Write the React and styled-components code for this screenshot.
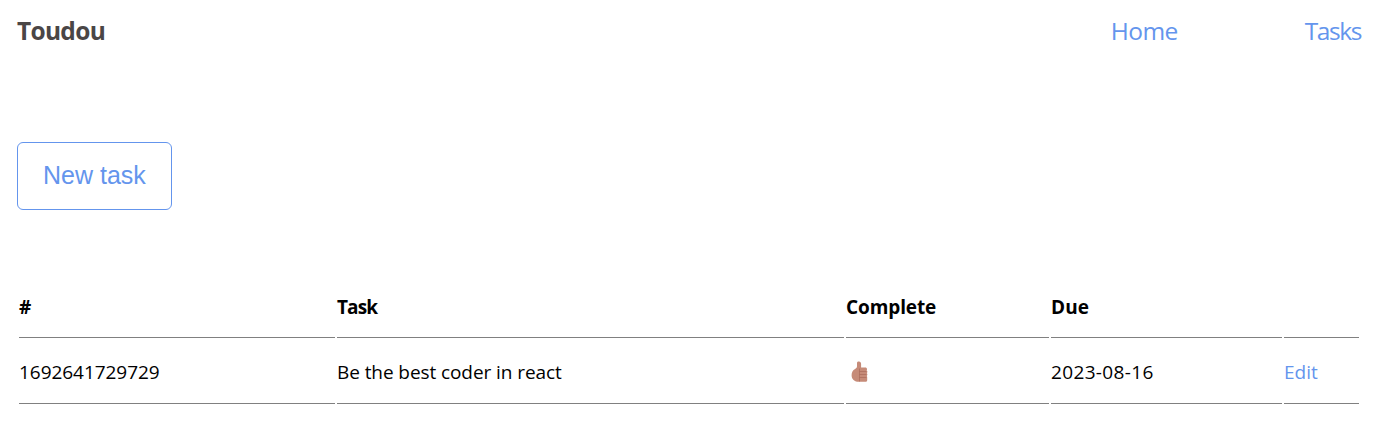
import React from "react";
import styled, { createGlobalStyle } from "styled-components";

const BLUE = "#6495ed";

const GlobalStyle = createGlobalStyle`
  body {
    margin: 0;
    background: #fff;
    color: #000;
    font-family: "Segoe UI", "Open Sans", "Noto Sans", sans-serif;
  }
`;

const Page = styled.div`
  padding: 0 32px 0 17px;
`;

const Header = styled.header`
  display: flex;
  align-items: center;
  justify-content: space-between;
  height: 62px;
`;

const Brand = styled.div`
  color: #4a4646;
  font-size: 24.5px;
  font-weight: 700;
  line-height: 36px;
  letter-spacing: -0.7px;
`;

const Nav = styled.nav`
  display: flex;
  gap: 127px;
`;

const Link = styled.a`
  color: ${BLUE};
  text-decoration: none;
`;

const NavLink = styled(Link)`
  font-size: 24.5px;
  line-height: 34px;
  letter-spacing: ${(p) => p.$spacing};
`;

const NewTaskButton = styled.button`
  display: block;
  margin: 80px 0 73px;
  height: 68px;
  padding: 0 25px 2px;
  border: 1px solid ${BLUE};
  border-radius: 6px;
  background: #fff;
  color: ${BLUE};
  font-family: "Liberation Sans", Arial, sans-serif;
  font-size: 25px;
`;

const Table = styled.table`
  width: 1344px;
  table-layout: fixed;
  border-collapse: separate;
  border-spacing: 2px 0;
  font-size: 19px;
  line-height: 27px;
`;

const Column = styled.col`
  width: ${(p) => p.$width}px;
`;

const HeadCell = styled.th`
  height: 55px;
  padding: 0 0 6px;
  box-sizing: border-box;
  border-bottom: 1px solid #808080;
  text-align: left;
  font-weight: 700;
  letter-spacing: ${(p) => p.$spacing || "0"};
`;

const Cell = styled.td`
  height: 66px;
  padding: 3px 0 0;
  box-sizing: border-box;
  border-bottom: 1px solid #808080;
  letter-spacing: ${(p) => p.$spacing || "0"};
  white-space: nowrap;
`;

const Thumb = styled.svg`
  display: block;
  width: 18px;
  height: 22px;
  margin-left: 5px;
`;

function ThumbsUp() {
  return (
    <Thumb viewBox="0 0 18 22" role="img" aria-label="Complete">
      <path
        fill="#c68b78"
        d="M6 1.8C6.2.7 7.1.4 8 .5c1.3.1 2.1 1 2.1 2.3v3.7h4.1c1.1 0 1.8.7 1.8 1.7 0 .5-.1.9-.4 1.2.5.3.8.8.8 1.4 0 .6-.2 1-.6 1.4.4.3.6.8.6 1.4 0 .6-.3 1.1-.7 1.4.3.3.5.7.5 1.2v3.1c0 .9-.6 1.5-1.5 1.5H8.2C3.3 20.8.6 18.2.6 14.2c0-2.7 1.1-5.1 3.5-6.3C5.5 7.2 6 6.4 6 5z"
      />
      <path
        fill="none"
        stroke="#a46555"
        strokeWidth=".6"
        d="M8.5 7.5v13M8.6 10.5h6.8M8.6 13.5h6.8M8.6 16.5h6.8"
      />
    </Thumb>
  );
}

const columns = [
  { label: "#", width: 316 },
  { label: "Task", width: 507, spacing: "-0.9px" },
  { label: "Complete", width: 203, spacing: "-0.1px" },
  { label: "Due", width: 231, spacing: "0.15px" },
  { label: "", width: 75 },
];

export default function App() {
  return (
    <Page>
      <GlobalStyle />
      <Header>
        <Brand>Toudou</Brand>
        <Nav>
          <NavLink $spacing="-0.6px">Home</NavLink>
          <NavLink $spacing="-1.4px">Tasks</NavLink>
        </Nav>
      </Header>
      <NewTaskButton>New task</NewTaskButton>
      <Table>
        <colgroup>
          {columns.map((c) => (
            <Column key={c.width} $width={c.width} />
          ))}
        </colgroup>
        <thead>
          <tr>
            {columns.map((c) => (
              <HeadCell key={c.width} $spacing={c.spacing}>
                {c.label}
              </HeadCell>
            ))}
          </tr>
        </thead>
        <tbody>
          <tr>
            <Cell $spacing="-0.05px">1692641729729</Cell>
            <Cell $spacing="-0.08px">Be the best coder in react</Cell>
            <Cell>
              <ThumbsUp />
            </Cell>
            <Cell $spacing="0.35px">2023-08-16</Cell>
            <Cell>
              <Link>Edit</Link>
            </Cell>
          </tr>
        </tbody>
      </Table>
    </Page>
  );
}
